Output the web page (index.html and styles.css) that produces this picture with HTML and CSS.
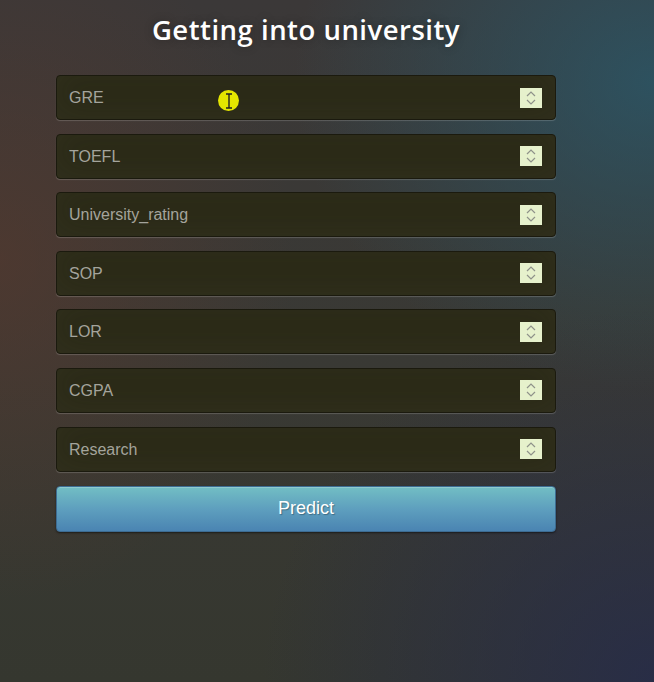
FILE: index.html
```html
<!DOCTYPE html>
<html lang="en">
<head>
<meta charset="utf-8">
<title>Getting into university</title>
<link rel="stylesheet" href="styles.css">
</head>
<body>
<main class="page">
  <h1 class="title">Getting into university</h1>
  <form class="form">
    <label class="field"><input class="input" type="number" placeholder="GRE"><span class="spin"><svg viewBox="0 0 22 20" width="22" height="20"><path d="M7 8 L11 4 L15 8 M7 12 L11 16 L15 12" fill="none" stroke="#8f928a" stroke-width="1.2"/></svg></span></label>
    <label class="field"><input class="input" type="number" placeholder="TOEFL"><span class="spin"><svg viewBox="0 0 22 20" width="22" height="20"><path d="M7 8 L11 4 L15 8 M7 12 L11 16 L15 12" fill="none" stroke="#8f928a" stroke-width="1.2"/></svg></span></label>
    <label class="field"><input class="input" type="number" placeholder="University_rating"><span class="spin"><svg viewBox="0 0 22 20" width="22" height="20"><path d="M7 8 L11 4 L15 8 M7 12 L11 16 L15 12" fill="none" stroke="#8f928a" stroke-width="1.2"/></svg></span></label>
    <label class="field"><input class="input" type="number" placeholder="SOP"><span class="spin"><svg viewBox="0 0 22 20" width="22" height="20"><path d="M7 8 L11 4 L15 8 M7 12 L11 16 L15 12" fill="none" stroke="#8f928a" stroke-width="1.2"/></svg></span></label>
    <label class="field"><input class="input" type="number" placeholder="LOR"><span class="spin"><svg viewBox="0 0 22 20" width="22" height="20"><path d="M7 8 L11 4 L15 8 M7 12 L11 16 L15 12" fill="none" stroke="#8f928a" stroke-width="1.2"/></svg></span></label>
    <label class="field"><input class="input" type="number" placeholder="CGPA"><span class="spin"><svg viewBox="0 0 22 20" width="22" height="20"><path d="M7 8 L11 4 L15 8 M7 12 L11 16 L15 12" fill="none" stroke="#8f928a" stroke-width="1.2"/></svg></span></label>
    <label class="field"><input class="input" type="number" placeholder="Research"><span class="spin"><svg viewBox="0 0 22 20" width="22" height="20"><path d="M7 8 L11 4 L15 8 M7 12 L11 16 L15 12" fill="none" stroke="#8f928a" stroke-width="1.2"/></svg></span></label>
    <button class="btn" type="button">Predict</button>
  </form>
  <span class="cursor" aria-hidden="true"><svg viewBox="0 0 8 16" width="8" height="16"><path d="M1 1 H7 M4 1 V15 M1 15 H7" fill="none" stroke="#222" stroke-width="1.4"/></svg></span>
</main>
</body>
</html>
```

FILE: styles.css
```css
html, body {
  margin: 0;
  padding: 0;
}

body {
  min-height: 682px;
  font-family: "Liberation Sans", Arial, sans-serif;
  background:
    radial-gradient(ellipse 55% 45% at 100% 12%, rgba(40, 92, 112, 0.7) 0%, rgba(40, 92, 112, 0) 100%),
    radial-gradient(ellipse 45% 50% at 0% 38%, rgba(92, 56, 44, 0.55) 0%, rgba(92, 56, 44, 0) 100%),
    radial-gradient(ellipse 60% 55% at 100% 100%, rgba(36, 42, 78, 0.75) 0%, rgba(36, 42, 78, 0) 100%),
    linear-gradient(180deg, #3b3838 0%, #393934 55%, #35372f 100%);
}

.page {
  position: relative;
  width: 500px;
  margin-left: 56px;
  padding-top: 11px;
}

.title {
  margin: 0 0 26px 0;
  text-align: center;
  font-family: "Open Sans", sans-serif;
  font-weight: 600;
  font-size: 27.5px;
  line-height: 38px;
  letter-spacing: 0.5px;
  color: #ffffff;
  text-shadow: 0 0 10px rgba(0, 0, 0, 0.3);
}

.form {
  display: flex;
  flex-direction: column;
  gap: 13.6px;
}

.field {
  display: flex;
  align-items: center;
  height: 45px;
  box-sizing: border-box;
  padding: 1px 13px 0 12px;
  background: #2b2a17;
  border: 1px solid #1b1a0e;
  border-radius: 4px;
  box-shadow: inset 0 -5px 30px rgba(90, 90, 70, 0.12), 0 1px 1px rgba(255, 255, 255, 0.18);
}

.input {
  flex: 1;
  min-width: 0;
  border: none;
  outline: none;
  background: transparent;
  font-family: "Liberation Sans", Arial, sans-serif;
  font-size: 16px;
  color: #ffffff;
  padding: 0;
  -moz-appearance: textfield;
}

.input::-webkit-inner-spin-button,
.input::-webkit-outer-spin-button {
  -webkit-appearance: none;
  margin: 0;
}

.input::placeholder {
  color: #a4a49c;
}

.spin {
  display: flex;
  width: 22px;
  height: 20px;
  background: #e6f1cc;
  margin-top: -1px;
}

.btn {
  height: 46px;
  margin-top: 0.4px;
  border: 1px solid #3d6c92;
  border-radius: 4px;
  background: linear-gradient(180deg, #72bec4 0%, #5e9fbe 50%, #4a84b2 100%);
  box-shadow: inset 0 1px 0 rgba(255, 255, 255, 0.2), 0 1px 2px rgba(0, 0, 0, 0.5);
  color: #ffffff;
  font-family: "Liberation Sans", Arial, sans-serif;
  font-size: 18px;
  text-shadow: 1px 1px 1px rgba(0, 0, 0, 0.3);
  padding: 0;
  cursor: pointer;
}

.cursor {
  position: absolute;
  left: 162px;
  top: 90px;
  width: 21px;
  height: 21px;
  border-radius: 50%;
  background: #e4e600;
  display: flex;
  align-items: center;
  justify-content: center;
}
```
